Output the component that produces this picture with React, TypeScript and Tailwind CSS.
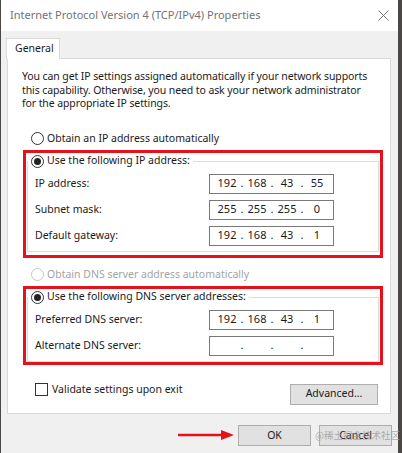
import React from "react";

const font = { fontFamily: '"Noto Sans", "Liberation Sans", sans-serif' };

function Radio({ checked, disabled }: { checked?: boolean; disabled?: boolean }) {
  return (
    <span
      className={`w-[13px] h-[13px] rounded-full border bg-white flex items-center justify-center shrink-0 ${
        disabled ? "border-[#c6c6c6]" : "border-[#333333]"
      }`}
    >
      {checked && <span className="w-[7px] h-[7px] rounded-full bg-[#222222]" />}
    </span>
  );
}

function IpBox({ parts }: { parts: string[] }) {
  return (
    <div className="w-[125px] h-[20px] border border-[#7a7a7a] bg-white flex items-center pl-[5px] text-[11px] text-[#1a1a1a]">
      {parts.map((p, i) => (
        <React.Fragment key={i}>
          <span className="w-[24px] text-center">{p}</span>
          {i < 3 && <span className="w-[6px] text-center">.</span>}
        </React.Fragment>
      ))}
    </div>
  );
}

function Row({ label, parts }: { label: string; parts: string[] }) {
  return (
    <div className="h-[26px] flex items-center pl-[7px]">
      <span className="w-[174px] text-[10.5px] text-[#1a1a1a]">{label}</span>
      <IpBox parts={parts} />
    </div>
  );
}

function Group({
  title,
  rows,
  pb,
}: {
  title: string;
  rows: { label: string; parts: string[] }[];
  pb: string;
}) {
  return (
    <div className={`ml-[15px] w-[360px] border-[3px] border-[#e5121b] ${pb}`}>
      <div className="mt-[8px] ml-[1px] mr-[1px] border border-[#dcdcdc]">
        <div className="-mt-[9px] h-[17px] flex items-center">
          <span className="bg-white flex items-center gap-[3px] pl-[3px] pr-[3px] text-[10.5px] text-[#1a1a1a]">
            <Radio checked />
            {title}
          </span>
        </div>
        <div className="mt-[1px] pb-[2px]">
          {rows.map((r) => (
            <Row key={r.label} label={r.label} parts={r.parts} />
          ))}
        </div>
      </div>
    </div>
  );
}

export default function App() {
  return (
    <div className="w-[402px] h-[453px] bg-[#4a4745] overflow-hidden" style={font}>
      <div className="ml-[1px] w-[397px] h-[453px] bg-[#f0f0f0] relative">
        {/* title bar */}
        <div className="h-[31px] bg-white flex items-center justify-between pl-[9px] pr-[8px]">
          <span className="text-[11px] text-[#737373]">Internet Protocol Version 4 (TCP/IPv4) Properties</span>
          <svg width="11" height="11" viewBox="0 0 11 11" className="mr-[1px]">
            <path d="M0.5 0.5 L10.5 10.5 M10.5 0.5 L0.5 10.5" stroke="#7a7a7a" strokeWidth="1" />
          </svg>
        </div>

        {/* tab */}
        <div className="pl-[6px] pt-[7px]">
          <div className="relative z-10 -ml-[1px] -mb-[1px] w-[54px] h-[21px] bg-white border border-b-0 border-[#d9d9d9] flex items-center pl-[8px] text-[10.5px] text-[#1a1a1a]">
            General
          </div>
          <div className="w-[384px] h-[356px] bg-white border border-[#d9d9d9]">
            <p className="mt-[11px] ml-[14px] text-[10.5px] tracking-[-0.1px] leading-[13.5px] text-[#1a1a1a] whitespace-nowrap">
              You can get IP settings assigned automatically if your network supports
              <br />
              this capability. Otherwise, you need to ask your network administrator
              <br />
              for the appropriate IP settings.
            </p>

            <div className="mt-[20px] ml-[23px] h-[16px] flex items-center gap-[3px] text-[10.5px] text-[#1a1a1a]">
              <Radio />
              Obtain an IP address automatically
            </div>

            <div className="mt-[3px]">
              <Group
                title="Use the following IP address:"
                pb="pb-[3px]"
                rows={[
                  { label: "IP address:", parts: ["192", "168", "43", "55"] },
                  { label: "Subnet mask:", parts: ["255", "255", "255", "0"] },
                  { label: "Default gateway:", parts: ["192", "168", "43", "1"] },
                ]}
              />
            </div>

            <div className="mt-[9px] ml-[23px] h-[16px] flex items-center gap-[3px] text-[10.5px] text-[#a3a3a3]">
              <Radio disabled />
              Obtain DNS server address automatically
            </div>

            <div className="mt-[3px]">
              <Group
                title="Use the following DNS server addresses:"
                pb="pb-0"
                rows={[
                  { label: "Preferred DNS server:", parts: ["192", "168", "43", "1"] },
                  { label: "Alternate DNS server:", parts: ["", "", "", ""] },
                ]}
              />
            </div>

            <div className="mt-[17px] flex items-start justify-between pl-[27px] pr-[12px]">
              <div className="h-[16px] flex items-center gap-[4px] text-[10.5px] text-[#1a1a1a]">
                <span className="w-[13px] h-[13px] border border-[#333333] bg-white" />
                Validate settings upon exit
              </div>
              <button className="mt-[2px] w-[88px] h-[21px] bg-[#e1e1e1] border border-[#adadad] text-[10.5px] text-[#1a1a1a]">
                Advanced...
              </button>
            </div>
          </div>
        </div>

        {/* dialog buttons */}
        <div className="mt-[11px] flex justify-end gap-[8px] pr-[6px]">
          <button className="w-[73px] h-[21px] bg-[#e1e1e1] border border-[#adadad] text-[10.5px] text-[#1a1a1a]">
            OK
          </button>
          <button className="w-[73px] h-[21px] bg-[#e1e1e1] border border-[#adadad] text-[10.5px] text-[#1a1a1a]">
            Cancel
          </button>
        </div>

        {/* annotation arrow */}
        <svg className="absolute left-[176px] top-[429px]" width="58" height="12" viewBox="0 0 58 12">
          <path d="M1 6 H46" stroke="#e5121b" strokeWidth="2.5" />
          <path d="M44 1 L57 6 L44 11 Z" fill="#e5121b" />
        </svg>

        {/* watermark */}
        <span
          className="absolute left-[314px] top-[428px] text-[9.5px] leading-[14px] text-[#9a9a9a]/80 whitespace-nowrap"
          style={{ fontFamily: '"Noto Sans CJK SC", "Noto Sans", sans-serif' }}
        >
          @稀土掘金技术社区
        </span>
      </div>
    </div>
  );
}
